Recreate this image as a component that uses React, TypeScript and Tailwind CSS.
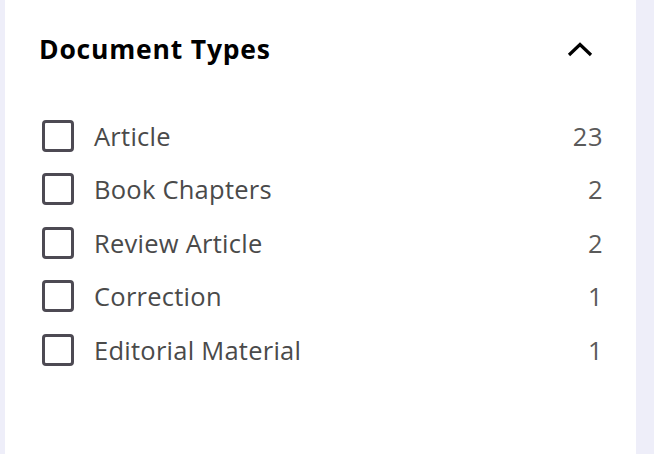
import React from 'react';

const items = [
  { label: 'Article', count: 23 },
  { label: 'Book Chapters', count: 2 },
  { label: 'Review Article', count: 2 },
  { label: 'Correction', count: 1 },
  { label: 'Editorial Material', count: 1 },
];

function App() {
  return (
    <div
      className="h-[454px] w-[654px] bg-[#eeeef9] pl-[5px] pr-[18px] flex"
      style={{ fontFamily: '"Open Sans", "Noto Sans", sans-serif' }}
    >
      <div className="flex-1 bg-white pl-[34px] pr-[33px]">
        {/* header */}
        <div className="h-[99px] flex items-center justify-between">
          <h2 className="text-[26.5px] font-bold text-black tracking-[0.8px]">Document Types</h2>
          <svg width="26" height="15" viewBox="0 0 26 15" className="mr-[10px]" fill="none">
            <path d="M2 13 L13 2.5 L24 13" stroke="#000" strokeWidth="3.2" />
          </svg>
        </div>

        {/* filter list */}
        <ul className="mt-[10px]">
          {items.map((it) => (
            <li key={it.label} className="h-[53.5px] flex items-center">
              <span className="w-[32px] h-[32px] ml-[3px] border-[3px] border-[#4d4a53] rounded-[4px] shrink-0" />
              <span className="ml-[20px] text-[25.5px] text-[#4a4a4a] tracking-[0.25px] flex-1">{it.label}</span>
              <span className="text-[25.5px] text-[#5a5a5a] tracking-[0.5px]">{it.count}</span>
            </li>
          ))}
        </ul>
      </div>
    </div>
  );
}

export default App;
